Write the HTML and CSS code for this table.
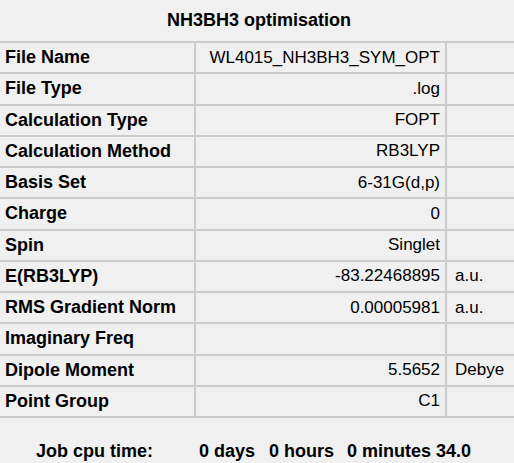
FILE: index.html
```html
<!DOCTYPE html>
<html>
<head>
<meta charset="utf-8">
<link rel="stylesheet" href="styles.css">
</head>
<body>
<div class="panel">
  <div class="title">NH3BH3 optimisation</div>
  <table class="props">
    <colgroup><col class="c-label"><col class="c-value"><col class="c-unit"></colgroup>
    <tr><td class="label">File Name</td><td class="value">WL4015_NH3BH3_SYM_OPT</td><td class="unit"></td></tr>
    <tr><td class="label">File Type</td><td class="value">.log</td><td class="unit"></td></tr>
    <tr><td class="label">Calculation Type</td><td class="value">FOPT</td><td class="unit"></td></tr>
    <tr><td class="label">Calculation Method</td><td class="value">RB3LYP</td><td class="unit"></td></tr>
    <tr><td class="label">Basis Set</td><td class="value">6-31G(d,p)</td><td class="unit"></td></tr>
    <tr><td class="label">Charge</td><td class="value">0</td><td class="unit"></td></tr>
    <tr><td class="label">Spin</td><td class="value">Singlet</td><td class="unit"></td></tr>
    <tr><td class="label">E(RB3LYP)</td><td class="value">-83.22468895</td><td class="unit">a.u.</td></tr>
    <tr><td class="label">RMS Gradient Norm</td><td class="value">0.00005981</td><td class="unit">a.u.</td></tr>
    <tr><td class="label">Imaginary Freq</td><td class="value"></td><td class="unit"></td></tr>
    <tr><td class="label">Dipole Moment</td><td class="value">5.5652</td><td class="unit">Debye</td></tr>
    <tr><td class="label">Point Group</td><td class="value">C1</td><td class="unit"></td></tr>
  </table>
  <div class="cpu">
    <span class="cpu-label">Job cpu time:</span>
    <span class="cpu-days">0 days</span>
    <span class="cpu-hours">0 hours</span>
    <span class="cpu-rest">0 minutes 34.0</span>
  </div>
</div>
</body>
</html>
```
FILE: styles.css
```css
html, body {
  margin: 0;
  padding: 0;
  background: #f0f0f0;
}
.panel {
  width: 514px;
  height: 463px;
  overflow: hidden;
  font-family: "Liberation Sans", Arial, sans-serif;
  color: #000;
}
.title {
  height: 41px;
  line-height: 41px;
  text-align: center;
  font-weight: bold;
  font-size: 18px;
  padding-left: 4px;
}
.props {
  border-collapse: collapse;
  table-layout: fixed;
  width: 514px;
  border-top: 2px solid #cbcbcb;
}
.c-label { width: 195px; }
.c-value { width: 251px; }
.c-unit { width: 68px; }
.props td {
  height: 29.25px;
  padding: 0;
  border-bottom: 2px solid #cbcbcb;
  white-space: nowrap;
  overflow: hidden;
  vertical-align: middle;
}
.props td.label {
  border-right: 2px solid #cbcbcb;
  font-weight: bold;
  font-size: 18px;
  padding-left: 5px;
}
.props td.value {
  border-right: 2px solid #cbcbcb;
  font-size: 17px;
  text-align: right;
  padding-right: 5px;
}
.props td.unit {
  font-size: 17px;
  padding-left: 8px;
}
.cpu {
  display: grid;
  grid-template-columns: 163px 70px 78px auto;
  margin-top: 23px;
  padding-left: 36px;
  line-height: 20px;
  font-size: 18px;
  font-weight: bold;
  white-space: nowrap;
}
```
